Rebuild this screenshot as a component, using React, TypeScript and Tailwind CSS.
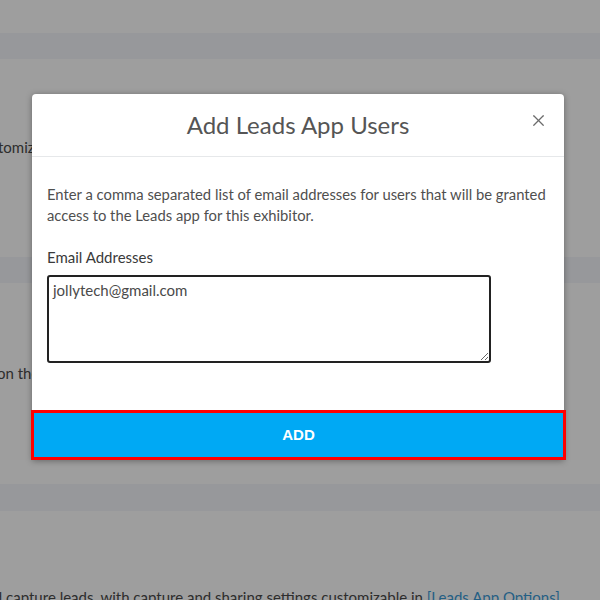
import { X } from "lucide-react";

// Page behind the dialog: only the left edge and bottom peek out past the modal.
function BackdropPage() {
  return (
    <div className="min-h-[600px] bg-white font-['Lato',sans-serif] text-[15px] text-[#4a4a4a]">
      <div className="h-[33px]" />
      <div className="h-[26px] bg-[#f4f5fa]" />
      <div className="h-[198px] pt-[78px]">
        <p className="-ml-[24px] whitespace-nowrap leading-[21px]">customize how leads are captured and shared</p>
      </div>
      <div className="h-[26px] bg-[#f4f5fa]" />
      <div className="h-[201px] pt-[80px]">
        <p className="-ml-[3px] whitespace-nowrap leading-[21px]">on the show floor</p>
      </div>
      <div className="h-[27px] bg-[#f4f5fa]" />
      <div className="h-[89px] pt-[76px]">
        <p className="-ml-[22px] whitespace-nowrap leading-[21px]">
          and capture leads, with capture and sharing settings customizable in{" "}
          <span className="text-[#3b9ad6]">[Leads App Options]</span>
        </p>
      </div>
    </div>
  );
}

export default function App() {
  return (
    <div className="relative h-[600px] w-[600px] overflow-hidden">
      <BackdropPage />

      <div className="absolute inset-0 bg-black/[0.38] pl-[32px] pt-[94px]">
        <div className="w-[532px] rounded-t-[4px] bg-white font-['Lato',sans-serif] shadow-[0_1px_6px_rgba(0,0,0,0.35)]">
          <div className="relative flex h-[63px] items-center justify-center border-b border-[#e6e8ea]">
            <h2 className="text-[24px] leading-none text-[#555]">Add Leads App Users</h2>
            <button type="button" className="absolute right-[16px] top-[17px] text-[#6b6b6b]">
              <X size={19} strokeWidth={1.5} />
            </button>
          </div>

          <div className="px-[15px] pb-[47px] pt-[27px] text-[14.8px] text-[#4f4f4f]">
            <p className="leading-[21px]">
              Enter a comma separated list of email addresses for users that will be granted
              access to the Leads app for this exhibitor.
            </p>
            <label className="mt-[21px] block text-[15px] leading-[21px] text-[#3a3a3a]">Email Addresses</label>
            <textarea
              defaultValue="jollytech@gmail.com"
              className="mt-[7px] block h-[88px] w-[444px] rounded-[3px] border-2 border-[#222] px-[4px] py-[4px] font-['Lato',sans-serif] text-[15px] leading-[18px] text-[#4a4a4a] outline-none"
            />
          </div>

          <button
            type="button"
            className="-mx-px block h-[50px] w-[535px] border-[3px] border-[#ff0000] bg-[#00a9f4] font-['Liberation_Sans',Arial,sans-serif] text-[15px] font-bold text-white"
          >
            ADD
          </button>
        </div>
      </div>
    </div>
  );
}
